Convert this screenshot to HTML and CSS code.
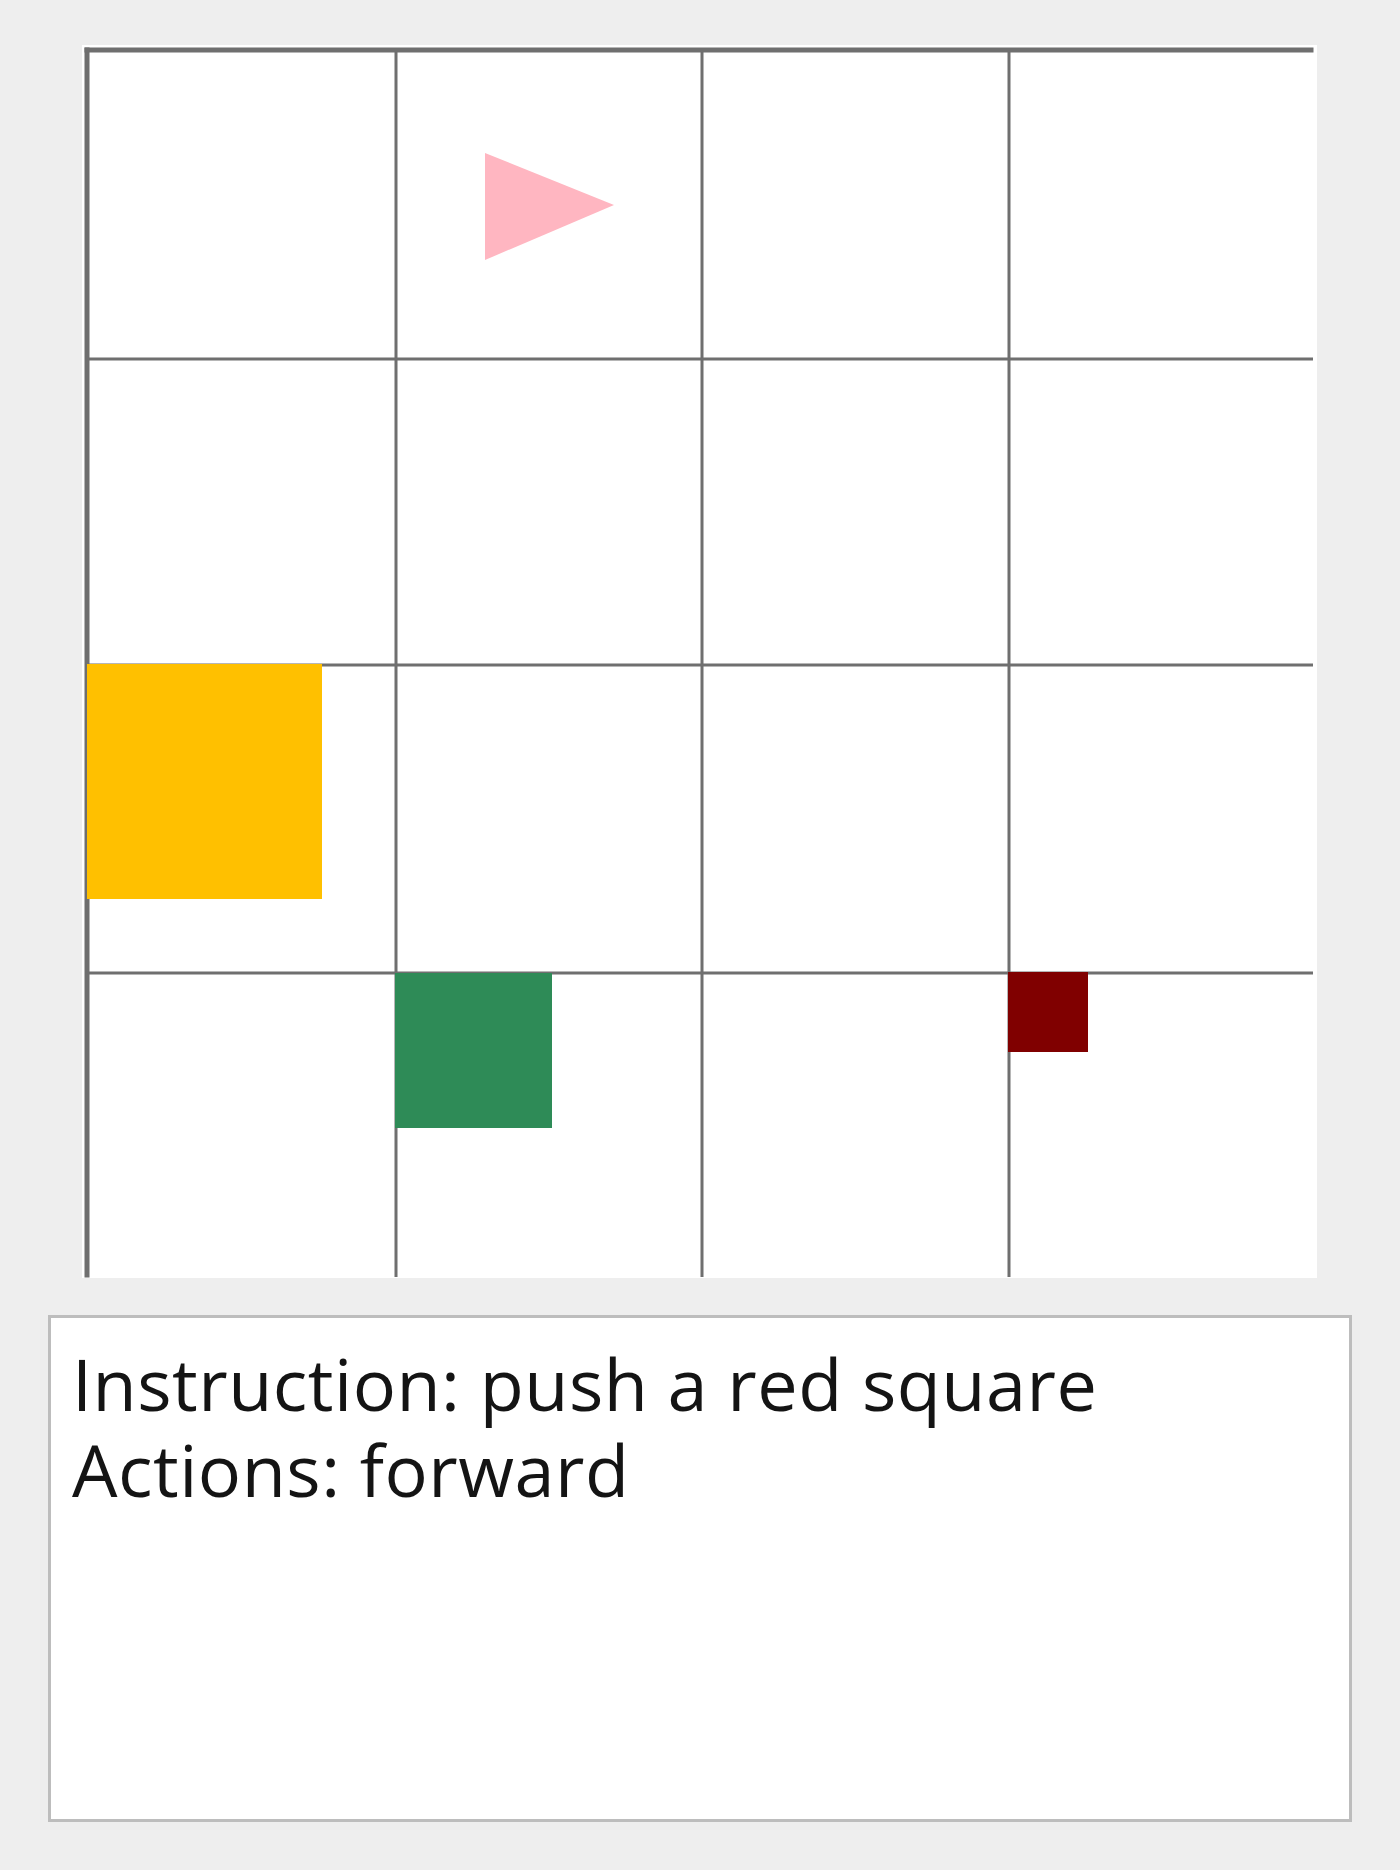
FILE: index.html
```html
<!DOCTYPE html>
<html lang="en">
<head>
<meta charset="utf-8">
<title>Grid world</title>
<link rel="stylesheet" href="styles.css">
</head>
<body>
<main class="app">
  <div class="board">
    <svg class="grid" width="1235" height="1233" viewBox="0 0 1235 1233" xmlns="http://www.w3.org/2000/svg">
      <rect x="0" y="0" width="1235" height="1233" fill="#ffffff"/>
      <g stroke="#6f6f6f" stroke-width="3" fill="none">
        <line x1="314" y1="5" x2="314" y2="1232"/>
        <line x1="620" y1="5" x2="620" y2="1232"/>
        <line x1="927" y1="5" x2="927" y2="1232"/>
        <line x1="5" y1="314" x2="1231" y2="314"/>
        <line x1="5" y1="620" x2="1231" y2="620"/>
        <line x1="5" y1="928" x2="1231" y2="928"/>
      </g>
      <g stroke="#6f6f6f" stroke-width="5" fill="none" stroke-linecap="square">
        <line x1="5" y1="5" x2="5" y2="1230"/>
        <line x1="5" y1="5" x2="1229" y2="5"/>
      </g>
      <rect x="5" y="619" width="235" height="235" fill="#ffc000"/>
      <rect x="313" y="928" width="157" height="155" fill="#2e8b57"/>
      <rect x="926" y="927" width="80" height="80" fill="#800000"/>
      <polygon points="403,108 532,160 403,215" fill="#ffb6c1"/>
    </svg>
  </div>
  <div class="log">
    <p class="line">Instruction: push a red square</p>
    <p class="line">Actions: forward</p>
  </div>
</main>
</body>
</html>
```

FILE: styles.css
```css
html, body {
  margin: 0;
  padding: 0;
  background: #eeeeee;
}

.app {
  width: 1400px;
  height: 1870px;
  box-sizing: border-box;
  padding-top: 45px;
  display: flex;
  flex-direction: column;
}

.board {
  padding-left: 82px;
  height: 1233px;
}

.grid {
  display: block;
}

.log {
  margin-top: 37px;
  margin-left: 48px;
  width: 1304px;
  height: 507px;
  box-sizing: border-box;
  border: 3px solid #bdbdbd;
  background: #ffffff;
  padding: 22px 18px 22px 21px;
  font-family: "Open Sans", Lato, sans-serif;
  font-weight: 500;
  font-size: 72px;
  letter-spacing: 0.5px;
  line-height: 86px;
  color: #141414;
  font-variant-ligatures: none;
}

.line {
  margin: 0;
  white-space: nowrap;
}
```
